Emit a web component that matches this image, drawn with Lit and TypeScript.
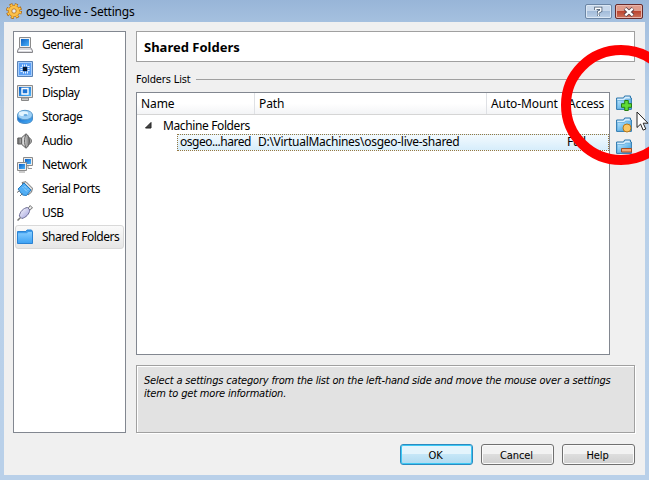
import { LitElement, html, css, svg } from "lit";
import { customElement } from "lit/decorators.js";

const defs = svg`<defs>
  <linearGradient id="b" x1="0" y1="0" x2="1" y2="1"><stop offset="0" stop-color="#0b5fc4"/><stop offset="1" stop-color="#4db4fb"/></linearGradient>
  <linearGradient id="f" x1="0" y1="0" x2="0" y2="1"><stop offset="0" stop-color="#85ccff"/><stop offset="1" stop-color="#3fa3f4"/></linearGradient>
  <linearGradient id="t" x1="0" y1="0" x2="1" y2="1"><stop offset="0" stop-color="#c4eaff"/><stop offset="1" stop-color="#2a96dc"/></linearGradient>
  <linearGradient id="g" x1="0" y1="0" x2="1" y2="0"><stop offset="0" stop-color="#666"/><stop offset=".5" stop-color="#ddd"/><stop offset="1" stop-color="#777"/></linearGradient>
  <linearGradient id="u" x1="0" y1="0" x2="1" y2="1"><stop offset="0" stop-color="#fff"/><stop offset="1" stop-color="#9c9cdc"/></linearGradient>
</defs>`;

const icon = (body: unknown) => html`<svg width="16" height="16" viewBox="0 0 16 16">${defs}${body}</svg>`;

const folder = svg`<path d="M.5 2.5h8.5l1-1.500h4.500l1 1.500v12H.5z" fill="#3d9cec" stroke="#2b83d3"/><path d="M1 4.300h9l1-1.300h4V14H1z" fill="url(#f)"/>`;
const smallFolder = svg`<path d="M.6 3h7l1-2h5.800v2h1v11.400H.6z" fill="#d7efff" stroke="#2673aa"/><path d="M1.300 5.500h7l1.200-1.500H14.800V13.800H1.300z" fill="url(#t)" stroke="#4a9bd0" stroke-width=".6"/>`;

const categories = [
  { name: "General", icon: svg`<path d="M2.5.5h11v10h-11z" fill="#f2f2f2" stroke="#8b8b8b"/><path d="M4 2h8v7H4z" fill="url(#b)"/><path d="M2.5 10.5h11l2 3v2H.5v-2z" fill="#d9d9de" stroke="#858589"/><path d="M2 13.5h12" stroke="#fff"/>` },
  { name: "System", icon: svg`<path d="M.5.5h15v15H.5z" fill="#a9cffb" stroke="#5a82b5"/><path d="M2 2h12v12H2z" fill="#5a9ff5"/><path d="M5 5h6v6H5z" fill="none" stroke="#e6f3ff" stroke-dasharray="1 1" stroke-width="3"/><path d="M5.500 5.500h5v5h-5z" fill="#2b6fcb"/><path d="M6 6h4v4H6z" fill="#071830"/>` },
  { name: "Display", icon: svg`<path d="M.5.5h15v12H.5z" fill="#e4e4e4" stroke="#8b8b8b"/><path d="M2 2h12v9H2z" fill="url(#b)"/><path d="M5 3.500h6v5.500H5z" fill="#1e75d5" stroke="#fff" stroke-width="1.400"/><path d="M4.500 13h7v2.500h-7z" fill="#ccc" stroke="#888"/>` },
  { name: "Storage", icon: svg`<path d="M.5 6v4c0 6 15 6 15 0V6z" fill="url(#b)" stroke="#4c8dc7"/><ellipse cx="8" cy="6" rx="7.500" ry="4.700" fill="#9ed0f6" stroke="#5b9bcc"/><ellipse cx="6.500" cy="4.700" rx="4.600" ry="2.400" fill="#e3f5ff"/><ellipse cx="8.500" cy="6.200" rx="2" ry="1.100" fill="#69abe0"/>` },
  { name: "Audio", icon: svg`<path d="M11.500 4.500c4 1 4 6 0 7z" fill="#aaa" stroke="#777"/><path d="M.8 5h3.500L9 .8c4.500 2.200 4.500 12.200 0 14.400L4.300 11H.8z" fill="url(#g)" stroke="#5a5a5a"/><path d="M9 1.500c-2 4-2 9 0 13M4.500 5v6" fill="none" stroke="#666"/>` },
  { name: "Network", icon: svg`<path d="M6.500.5h9v8h-9z" fill="#ececec" stroke="#8a8a8a"/><path d="M8 2h6v5H8z" fill="url(#b)"/><path d="M11 9v2.500h4" fill="none" stroke="#999"/><path d="M.5 5.500h9v8h-9z" fill="#ececec" stroke="#8a8a8a"/><path d="M2 7h6v5H2z" fill="url(#b)"/><path d="M2 15h6" stroke="#999"/>` },
  { name: "Serial Ports", icon: svg`<path d="M5 1.500 9 .7l6.500 6.500-1 4L11 14z" fill="#ddd" stroke="#777"/><path d="M1 8 7 2l7 7-4.500 5.500-4-.5z" fill="#50aef5" stroke="#267cc2"/><path d="m6 6.500 4.500 4.500M7.500 5l4 4" stroke="#d5efff" stroke-dasharray="1 1"/><path d="M0 11.500 3 9.500M3 15l2.500-2.500" stroke="#777"/>` },
  { name: "USB", icon: svg`<path d="m11 3.500 2.200-3L15.500 3 12.500 5z" fill="#eee" stroke="#777"/><path d="M10.500 2.500c-4 .5-7.500 4-8.200 8.500l2.500 2.500c4.200-1 7.500-4.500 8-8.500z" fill="url(#u)" stroke="#6b6b94"/><path d="m3.500 12.500-3 3" stroke="#777" stroke-width="1.500"/>` },
  { name: "Shared Folders", icon: folder },
];

@customElement("app-root")
export class AppRoot extends LitElement {
  static styles = css`
    :host { display: block; }
    * { box-sizing: border-box; }
    svg { display: block; flex: none; }
    .window { position: relative; width: 649px; height: 480px; overflow: hidden; padding: 0 4px 5px; display: flex; flex-direction: column;
      background: linear-gradient(#98b5d8, #a5c0df 22px, #b9d1ea 110px, #b9d0e9); font: 12px/16px "Noto Sans", "Open Sans", sans-serif; color: #000; white-space: nowrap; }
    .title { height: 22px; flex: none; display: flex; align-items: center; padding: 0 2px; }
    .title .t { margin-left: 4px; flex: 1; padding-top: 2px; letter-spacing: -.22px; }
    .cap { width: 27px; height: 15px; border: 1px solid #6c86a5; border-radius: 2px; margin-left: 3px; margin-top: 1px; box-shadow: inset 0 0 0 1px #dce8f5; background: linear-gradient(#c8d8eb 50%, #a3bcda 50%, #bdd1e8); display: flex; align-items: center; justify-content: center; }
    .cap.close { border-color: #682b2b; width: 28px; background: linear-gradient(#df9c8c 50%, #bc4531 50%, #cc735c); box-shadow: inset 0 0 0 1px #e9b5aa; }
    .client { flex: 1; background: #f0f0f0; padding: 9px 9px 10px; display: flex; flex-direction: column; }
    .body { display: flex; gap: 10px; height: 402px; }
    .nav { width: 113px; border: 1px solid #828790; background: #fff; padding: 1px; letter-spacing: -.5px; }
    .item { height: 24px; display: flex; align-items: center; gap: 9px; padding-left: 1px; border: 1px solid transparent; border-radius: 3px; }
    .item.sel { border-color: #d9d9d9; background: linear-gradient(#fafafa, #e6e6e6); }
    .main { width: 499px; display: flex; flex-direction: column; }
    .heading { height: 31px; border: 1px solid #a0a0a0; background: #fff; padding: 7px 7px 0; font: bold 13px/16px "Noto Sans", sans-serif; }
    .group { height: 30px; display: flex; align-items: center; gap: 6px; padding-top: 5px; }
    .group span { font: 11px/16px "DejaVu Sans Condensed", "DejaVu Sans", sans-serif; letter-spacing: -.13px; width: 54px; padding-top: 1px; }
    .rule { flex: 1; height: 1px; background: #a0a0a0; }
    .listrow { display: flex; gap: 6px; height: 263px; }
    .table { width: 474px; border: 1px solid #828790; background: #fff; }
    .head { height: 22px; display: flex; border-bottom: 1px solid #d5d5d5; background: linear-gradient(#fff 50%, #f3f4f6); letter-spacing: -.1px; }
    .head span { padding: 3px 0 0 4px; border-right: 1px solid #dfe1e5; }
    .head span:last-child { border: 0; letter-spacing: -.25px; }
    .c1 { width: 118px; } .c2 { width: 232px; } .c3 { width: 77px; } .c4 { flex: 1; }
    .parent { height: 19px; padding: 2px 0 0 8px; display: flex; gap: 11px; align-items: center; letter-spacing: -.38px; }
    .child { margin-left: 40px; height: 17px; border: 1px dotted #957840; background: linear-gradient(#f3fafe, #d6edfb); display: flex; line-height: 14px; letter-spacing: -.28px; }
    .child .n { width: 80px; padding-left: 2px; letter-spacing: -.47px; } .child .p { width: 309px; }
    .tools { padding-top: 3px; display: flex; flex-direction: column; gap: 6px; }
    .info { margin-top: 10px; height: 68px; border: 1px solid #a0a0a0; box-shadow: inset 1px 1px #fff, 1px 1px #fff; background: #e2e2e2; padding: 8px 7px; font: italic 11px/13px "DejaVu Sans Condensed", "DejaVu Sans", sans-serif; letter-spacing: -.18px; }
    .buttons { display: flex; justify-content: flex-end; gap: 8px; margin: 11px 1px 0 0; }
    .btn { width: 73px; height: 21px; border: 1px solid #707070; border-radius: 3px; background: linear-gradient(#f2f2f2 50%, #dddddd 50%, #cfcfcf); box-shadow: inset 0 0 0 1px #fafafa; font: 11px/20px "DejaVu Sans Condensed", "DejaVu Sans", sans-serif; color: #000; letter-spacing: -.1px; text-align: center; padding: 1px 2px 0 0; }
    .btn.ok { border-color: #2c8ac0; background: linear-gradient(#e4f4fc 50%, #c5e6f7 50%, #b0daf0); box-shadow: inset 0 0 0 1px #3cc8f4; }
    .mark { position: absolute; left: 560.5px; top: 45px; width: 120px; height: 120px; border: 10px solid #f00; border-radius: 50%; }
    .cursor { position: absolute; left: 636px; top: 111px; }
  `;

  render() {
    return html`<div class="window">
      <div class="title">
        <svg width="16" height="16" viewBox="0 0 16 16"><circle cx="8" cy="8" r="6.300" fill="none" stroke="#a85f09" stroke-width="3.200" stroke-dasharray="2.800 2.150"/><circle cx="8" cy="8" r="5.700" fill="#fbc04a" stroke="#c67a10" stroke-width=".8"/><circle cx="8" cy="8" r="6.300" fill="none" stroke="#ffc74a" stroke-width="1.800" stroke-dasharray="2 2.950" stroke-dashoffset="-.4"/><circle cx="8" cy="8" r="2.200" fill="#e8edf3" stroke="#b36a10" stroke-width=".8"/></svg>
        <span class="t">osgeo-live - Settings</span>
        <div class="cap"><svg width="11" height="11" viewBox="0 0 11 11"><path d="M2.800 4V2.300h5v2.500L5.500 6v1.500M5.500 8.500V10" fill="none" stroke="#44566b" stroke-width="3"/><path d="M2.800 4V2.300h5v2.500L5.500 6v1.500M5.500 8.500V10" fill="none" stroke="#fff" stroke-width="1.500"/></svg></div>
        <div class="cap close"><svg width="12" height="10" viewBox="0 0 12 10"><path d="m2 1.500 8 7m0-7-8 7" stroke="#583e45" stroke-width="4"/><path d="m2.300 1.700 7.400 6.600m0-6.600L2.300 8.300" stroke="#fff" stroke-width="2.300"/></svg></div>
      </div>
      <div class="client">
        <div class="body">
          <div class="nav">${categories.map((c, i) => html`<div class="item ${i === 8 ? "sel" : ""}">${icon(c.icon)}<span>${c.name}</span></div>`)}</div>
          <div class="main">
            <div class="heading">Shared Folders</div>
            <div class="group"><span>Folders List</span><div class="rule"></div></div>
            <div class="listrow">
              <div class="table">
                <div class="head"><span class="c1">Name</span><span class="c2">Path</span><span class="c3">Auto-Mount</span><span class="c4">Access</span></div>
                <div class="parent"><svg width="7" height="7"><path d="M6 .5V6H.5z" fill="#444" stroke="#222"/></svg><span>Machine Folders</span></div>
                <div class="child"><span class="n">osgeo...hared</span><span class="p">D:\\VirtualMachines\\osgeo-live-shared</span><span>Full</span></div>
              </div>
              <div class="tools">
                ${icon(svg`${smallFolder}<path d="M8.700 5.500h3.600v3.200h3.200v3.600h-3.200v3.200H8.700v-3.200H5.500V8.700h3.200z" fill="#5fdc35" stroke="#267f12"/>`)}
                ${icon(svg`${smallFolder}<circle cx="11" cy="11" r="4" fill="#fac765" stroke="#b97818"/>`)}
                ${icon(svg`${smallFolder}<path d="M5.500 9.500h10v3.500h-10z" fill="#f5a878" stroke="#a54c20"/>`)}
              </div>
            </div>
            <div class="info">Select a settings category from the list on the left-hand side and move the mouse over a settings<br>item to get more information.</div>
          </div>
        </div>
        <div class="buttons"><button class="btn ok">OK</button><button class="btn">Cancel</button><button class="btn">Help</button></div>
      </div>
      <div class="mark"></div>
      <svg class="cursor" width="13" height="21" viewBox="0 0 13 21"><path d="M1 1v15.500l3.600-3.400 2.500 6 2.700-1.100-2.600-5.800H12z" fill="#fff" stroke="#222"/></svg>
    </div>`;
  }
}
